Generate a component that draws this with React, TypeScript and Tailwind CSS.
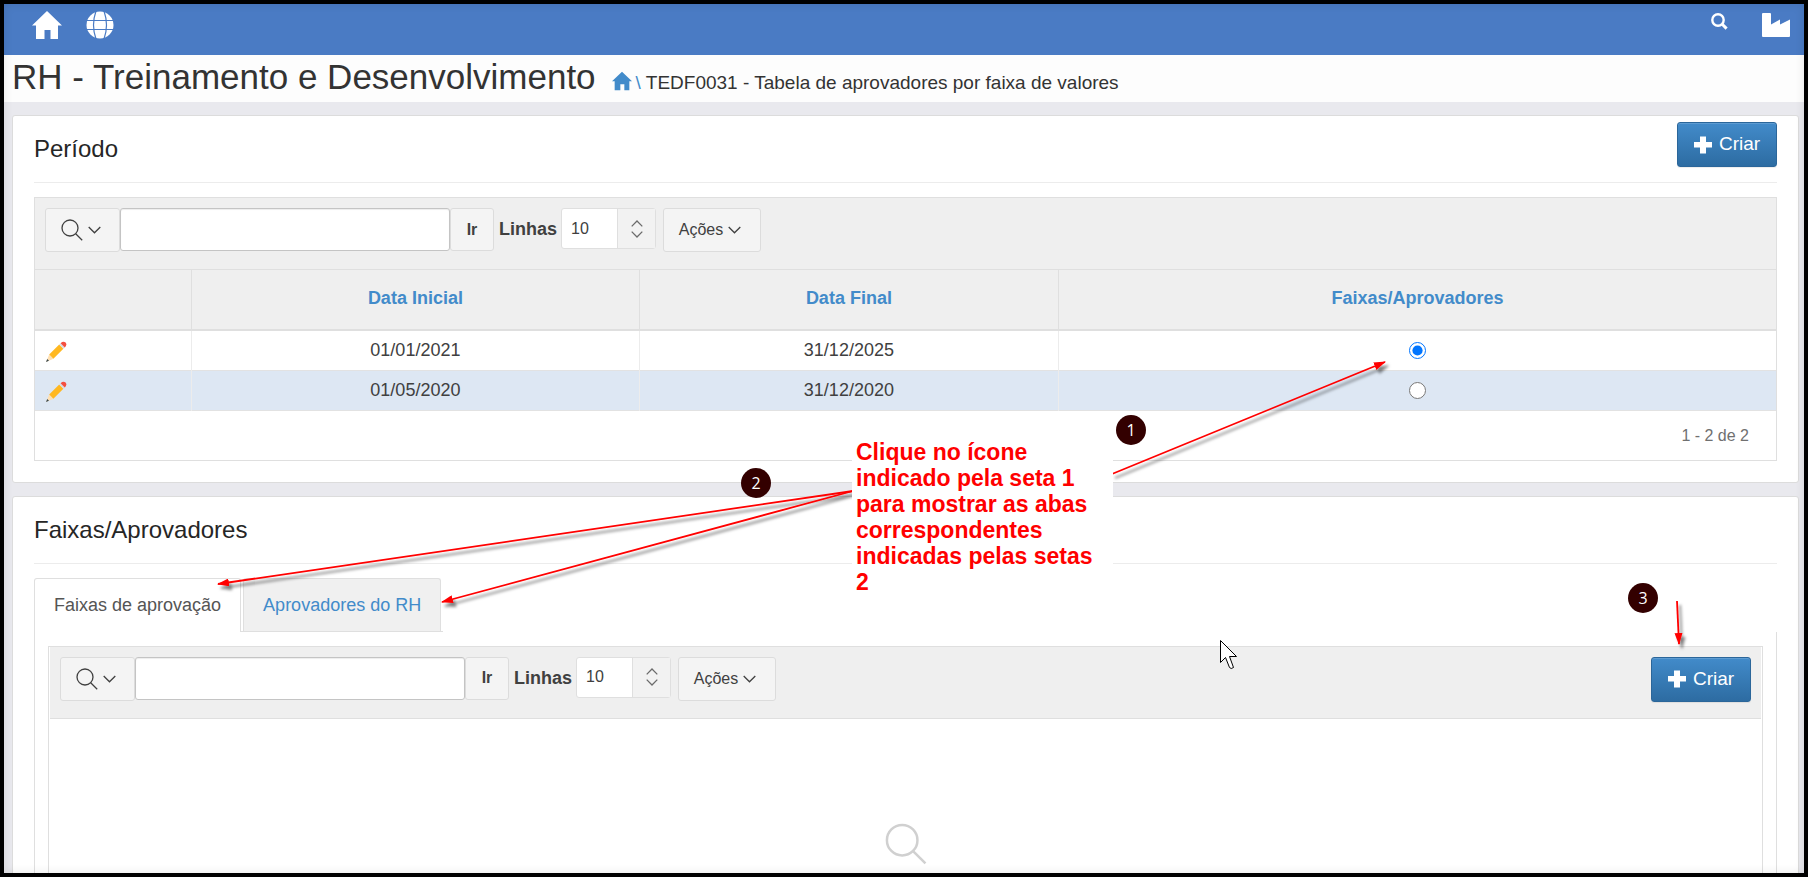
import type { ReactNode } from "react";

type Periodo = { inicial: string; final: string; selected: boolean };

const periodos: Periodo[] = [
  { inicial: "01/01/2021", final: "31/12/2025", selected: true },
  { inicial: "01/05/2020", final: "31/12/2020", selected: false },
];

function HomeIcon({ className }: { className: string }) {
  return (
    <svg viewBox="0 0 30 28" className={className} fill="currentColor" aria-hidden="true">
      <path d="M15 0 L30 14.5 H26 V28 H18.5 V19 H12.5 V28 H4 V14.5 H0 Z" />
    </svg>
  );
}

function GlobeIcon() {
  return (
    <svg viewBox="0 0 28 28" className="h-7 w-7" aria-hidden="true">
      <circle cx="14" cy="14" r="13.5" fill="#fff" />
      <g fill="none" stroke="#4a7bc4" strokeWidth="1.2">
        <path d="M0 9.5 H28 M0 18.5 H28" />
        <path d="M10 0 Q5 14 10 28 M18 0 Q23 14 18 28" />
      </g>
    </svg>
  );
}

function SearchIcon() {
  return (
    <svg viewBox="0 0 17 17" className="h-[17px] w-[17px]" fill="none" stroke="currentColor" aria-hidden="true">
      <circle cx="7" cy="7" r="5.7" strokeWidth="2.4" />
      <path d="M11 11 L15.6 15.6" strokeWidth="3" />
    </svg>
  );
}

function FactoryIcon() {
  return (
    <svg viewBox="0 0 28 24" className="h-6 w-7" fill="currentColor" aria-hidden="true">
      <path d="M0 1 Q0 0 1 0 H8 Q9 0 9 1 V11.5 L18 6.5 V11.5 L28 6.5 V23 Q28 24 27 24 H1 Q0 24 0 23 Z" />
    </svg>
  );
}

function LensIcon({ className }: { className: string }) {
  return (
    <svg viewBox="0 0 22 22" className={className} fill="none" stroke="currentColor" strokeWidth="1.3" aria-hidden="true">
      <circle cx="9" cy="9" r="8" />
      <path d="M14.7 14.7 L21.2 21.2" />
    </svg>
  );
}

function ChevronIcon() {
  return (
    <svg viewBox="0 0 13 8" className="h-2 w-[13px]" fill="none" stroke="currentColor" strokeWidth="1.3" aria-hidden="true">
      <path d="M0.7 1 L6.5 6.8 L12.3 1" />
    </svg>
  );
}

function PencilIcon() {
  return (
    <svg viewBox="0 0 22 22" className="h-[22px] w-[22px]" aria-hidden="true">
      <path d="M1 21 L4.2 13.6 L8.4 17.8 Z" fill="#ffe0b2" />
      <path d="M1 21 L2.2 18 L4 19.8 Z" fill="#37474f" />
      <path d="M4.2 13.6 L14.2 3.6 L18.4 7.8 L8.4 17.8 Z" fill="#ffb820" />
      <path d="M14.2 3.6 L15.6 2.2 L19.8 6.4 L18.4 7.8 Z" fill="#d8dde0" />
      <path d="M15.6 2.2 Q18 -0.2 20.6 1.4 Q22.4 4 19.8 6.4 Z" fill="#f44f40" />
    </svg>
  );
}

function CriarButton() {
  return (
    <button className="flex h-[45px] w-[100px] items-center justify-center gap-[7px] rounded-[3px] border border-[#2b669a] bg-linear-to-b from-[#428bca] to-[#2d6ca2] text-[19px] text-white shadow-[inset_0_1px_0_rgba(255,255,255,0.15),0_1px_1px_rgba(0,0,0,0.075)]">
      <svg viewBox="0 0 18 18" className="h-[18px] w-[18px]" fill="currentColor" aria-hidden="true">
        <path d="M6 0.5 H12 V6 H18 V11.5 H12 V17.5 H6 V11.5 H0 V6 H6 Z" />
      </svg>
      Criar
    </button>
  );
}

function Toolbar({ id, children }: { id: string; children?: ReactNode }) {
  return (
    <div className="flex h-[72px] items-start border-b border-[#dfdfdf] bg-[#efefef] px-[10px] pt-[10px] text-base text-[#404040]">
      <button
        aria-label="Selecionar colunas para pesquisa"
        className="flex h-11 w-[75px] items-center justify-center gap-[5px] rounded-[3px] border border-[#dcdcdc] bg-[#f4f4f4] pr-1"
      >
        <LensIcon className="h-[22px] w-[22px]" />
        <ChevronIcon />
      </button>
      <input
        type="text"
        aria-label="Pesquisar"
        className="h-[43px] w-[330px] rounded-[3px] border border-[#c4c4c4] bg-white px-3 shadow-[inset_0_1px_1px_rgba(0,0,0,0.075)]"
      />
      <button className="h-[43px] w-11 rounded-[3px] border border-[#dcdcdc] bg-[#f4f4f4] font-bold">
        Ir
      </button>
      <label htmlFor={id} className="mr-1 ml-[5px] text-lg leading-[43px] font-bold">
        Linhas
      </label>
      <div className="relative">
        <select
          id={id}
          defaultValue="10"
          className="h-[41px] w-[95px] appearance-none rounded-[3px] border border-[#dfdfdf] bg-white pl-[9px]"
        >
          <option>10</option>
          <option>25</option>
          <option>50</option>
        </select>
        <span className="pointer-events-none absolute inset-y-px right-px flex w-[38px] flex-col items-center justify-center border-l border-[#dfdfdf] bg-[#f2f2f2] text-[#6b6b6b]">
          <svg viewBox="0 0 12 18" className="h-[18px] w-3" fill="none" stroke="currentColor" strokeWidth="1.3" aria-hidden="true">
            <path d="M0.7 6.4 L6 1 L11.3 6.4 M0.7 11.6 L6 17 L11.3 11.6" />
          </svg>
        </span>
      </div>
      <button className="ml-[7px] flex h-11 w-[98px] items-center justify-center gap-[5px] rounded-[3px] border border-[#dcdcdc] bg-[#f4f4f4] pr-1">
        Ações
        <ChevronIcon />
      </button>
      <div className="ml-auto">{children}</div>
    </div>
  );
}

function Card({ title, action, children }: { title: string; action?: ReactNode; children: ReactNode }) {
  return (
    <section className="mr-[5px] ml-2 rounded-[3px] border border-[#dcdcdc] bg-white px-[21px] pb-[21px]">
      <header className="flex items-start justify-between border-b border-[#ececec]">
        <h2 className="py-[17px] text-2xl leading-8 text-[#262626]">{title}</h2>
        {action && <div className="pt-[6px]">{action}</div>}
      </header>
      <div className="pt-[14px]">{children}</div>
    </section>
  );
}

function PeriodoTable() {
  return (
    <div className="border border-[#dfdfdf]">
      <Toolbar id="linhas-periodo" />
      <table className="w-full table-fixed border-collapse text-lg text-[#404040]">
        <colgroup>
          <col className="w-[9%]" />
          <col className="w-[25.7%]" />
          <col className="w-[24.1%]" />
          <col />
        </colgroup>
        <thead>
          <tr className="h-[60px] border-b-2 border-[#dfdfdf] bg-[#efefef] text-[#428bca]">
            <th className="border-r border-[#dfdfdf]" aria-label="Editar"></th>
            <th className="border-r border-[#dfdfdf] pb-[3px]">Data Inicial</th>
            <th className="border-r border-[#dfdfdf] pb-[3px]">Data Final</th>
            <th className="pb-[3px]">Faixas/Aprovadores</th>
          </tr>
        </thead>
        <tbody>
          {periodos.map((p) => (
            <tr key={p.inicial} className="h-10 border-b border-[#e2e2e2] text-center even:bg-[#dde7f3]">
              <td className="border-r border-[#ececec] pl-[10px]">
                <a href="#editar" aria-label={`Editar ${p.inicial}`} className="block w-[22px] pt-1">
                  <PencilIcon />
                </a>
              </td>
              <td className="border-r border-[#ececec]">{p.inicial}</td>
              <td className="border-r border-[#ececec]">{p.final}</td>
              <td>
                <input
                  type="radio"
                  name="periodo"
                  aria-label={`Faixas/Aprovadores ${p.inicial}`}
                  defaultChecked={p.selected}
                  className="mx-auto block h-[17px] w-[17px]"
                />
              </td>
            </tr>
          ))}
        </tbody>
      </table>
      <p className="pr-[27px] text-right text-base leading-[49px] text-[#707070]">1 - 2 de 2</p>
    </div>
  );
}

function FaixasTabs() {
  return (
    <>
      <div className="flex text-lg leading-[52px]">
        <button className="rounded-t-[3px] border border-b-0 border-[#dfdfdf] px-[19px] text-[#555]">
          Faixas de aprovação
        </button>
        <div className="flex border-b border-[#dfdfdf] px-[2px]">
          <button className="rounded-t-[3px] border border-b-0 border-[#dfdfdf] bg-[#f0f0f0] px-[19px] text-[#428bca]">
            Aprovadores do RH
          </button>
        </div>
      </div>
      <div className="border-x border-[#dfdfdf] px-[13px] pt-[14px]">
        <div className="border border-[#dfdfdf] px-px">
          <Toolbar id="linhas-faixas">
            <CriarButton />
          </Toolbar>
          <div className="flex justify-center pt-[104px] pb-40 text-[#d0d0d0]">
            <LensIcon className="h-[42px] w-[42px]" />
          </div>
        </div>
      </div>
    </>
  );
}

function Step({ n, className }: { n: number; className: string }) {
  return (
    <span className={`absolute flex h-[30px] w-[30px] items-center justify-center rounded-full bg-[#330000] font-['Open_Sans',sans-serif] text-base text-white ${className}`}>
      {n}
    </span>
  );
}

/* Instructions drawn over the page */
function Annotations() {
  return (
    <div className="pointer-events-none absolute inset-0">
      <svg viewBox="0 0 1808 877" className="absolute top-0 left-0 h-[877px] w-[1808px]" aria-hidden="true">
        <defs>
          <marker id="head" viewBox="0 0 12 8" refX="11" refY="4" markerWidth="12" markerHeight="8" markerUnits="userSpaceOnUse" orient="auto">
            <path d="M0 0 L12 4 L0 8 Z" fill="#f00" />
          </marker>
          <filter id="drop" filterUnits="userSpaceOnUse" x="0" y="0" width="1808" height="877">
            <feDropShadow dx="3" dy="4" stdDeviation="1.5" floodColor="#000" floodOpacity="0.5" />
          </filter>
        </defs>
        <g stroke="#f00" strokeWidth="1.8" filter="url(#drop)">
          <path d="M1112 474 L1385 362" markerEnd="url(#head)" />
          <path d="M853 491 L218 584" markerEnd="url(#head)" />
          <path d="M853 491 L442 602" markerEnd="url(#head)" />
          <path d="M1677 601 L1679 644" markerEnd="url(#head)" />
        </g>
        <path d="M1220.5 640.5 V662.5 L1225.5 657.5 L1229.5 667.5 Q1231 669.5 1233.5 667.5 L1229.5 656.5 H1236.5 Z" fill="#fff" stroke="#000" />
      </svg>
      <p className="absolute top-[439px] left-[852px] w-[261px] bg-white pr-4 pl-1 text-[23px] leading-[26px] font-bold text-[#f00]">
        Clique no ícone indicado pela seta 1 para mostrar as abas correspondentes indicadas pelas setas 2
      </p>
      <Step n={1} className="top-[415px] left-[1116px]" />
      <Step n={2} className="top-[468px] left-[741px]" />
      <Step n={3} className="top-[583px] left-[1628px]" />
    </div>
  );
}

function App() {
  return (
    <div className="relative h-screen overflow-hidden bg-black p-1 font-['Liberation_Sans',Arial,sans-serif]">
      <div className="h-full overflow-hidden bg-[#e9e9ee]">
        <nav className="flex h-[51px] items-start bg-[#4a7bc4] pt-[7px] pr-[14px] pl-7 text-white">
          <a href="#inicio" aria-label="Início">
            <HomeIcon className="h-7 w-[30px]" />
          </a>
          <a href="#idioma" aria-label="Idioma" className="ml-6">
            <GlobeIcon />
          </a>
          <button aria-label="Buscar" className="mt-[2px] ml-auto">
            <SearchIcon />
          </button>
          <a href="#empresa" aria-label="Empresa" className="mt-[2px] ml-[34px]">
            <FactoryIcon />
          </a>
        </nav>

        <div className="flex h-[47px] items-end bg-[#fdfdfd] pl-2 text-[#333]">
          <h1 className="mb-1 text-[35px] leading-[43px]">RH - Treinamento e Desenvolvimento</h1>
          <a href="#inicio" aria-label="Início" className="mb-[11px] ml-4 text-[#428bca]">
            <HomeIcon className="h-5 w-5" />
          </a>
          <span className="mb-[5px] ml-1 text-[19px] leading-7">
            <span className="text-[#428bca]">\</span> TEDF0031 - Tabela de aprovadores por faixa de valores
          </span>
        </div>

        <main className="flex flex-col gap-[13px] pt-[13px]">
          <Card title="Período" action={<CriarButton />}>
            <PeriodoTable />
          </Card>
          <Card title="Faixas/Aprovadores">
            <FaixasTabs />
          </Card>
        </main>
      </div>
      <div className="pointer-events-none absolute inset-1 shadow-[inset_0_0_10px_rgba(0,0,0,0.1)]" />
      <Annotations />
    </div>
  );
}

export default App;
